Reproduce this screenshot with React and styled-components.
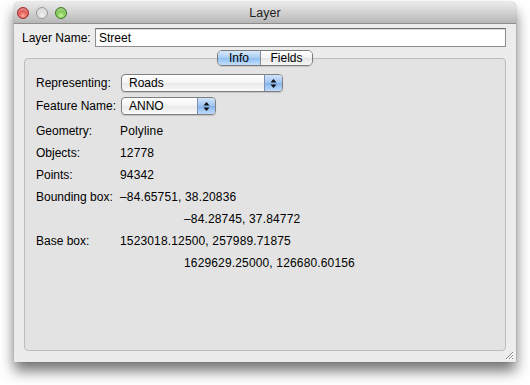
import React from "react";
import styled, { createGlobalStyle } from "styled-components";

const Global = createGlobalStyle`
  html, body { margin: 0; padding: 0; background: #ffffff; }
  body { font-family: "Liberation Sans", Arial, sans-serif; font-size: 12px; color: #000; }
`;

const Stage = styled.div`
  width: 530px;
  height: 385px;
  padding: 2px 14px 0 14px;
  box-sizing: border-box;
`;

const Window = styled.div`
  position: relative;
  width: 502px;
  height: 360px;
  background: #ececec;
  border-radius: 5px 5px 0 0;
  box-shadow: 0 9px 14px rgba(0, 0, 0, 0.55), 0 0 1px rgba(0, 0, 0, 0.5);
  display: flex;
  flex-direction: column;
`;

const TitleBar = styled.div`
  height: 22px;
  flex: none;
  border-radius: 5px 5px 0 0;
  background: linear-gradient(#eaeaea, #d2d2d2 50%, #b6b6b6);
  border-bottom: 1px solid #8e8e8e;
  box-sizing: border-box;
  display: flex;
  align-items: center;
  position: relative;
`;

const Lights = styled.div`
  display: flex;
  gap: 7px;
  padding-left: 3px;
`;

const Light = styled.div`
  width: 12px;
  height: 12px;
  border-radius: 50%;
  box-sizing: border-box;
  border: 1px solid ${(p) => p.$edge};
  background: radial-gradient(circle at 50% 75%, ${(p) => p.$light} 0%, ${(p) => p.$mid} 55%, ${(p) => p.$dark} 100%);
  box-shadow: inset 0 2px 2px rgba(255,255,255,0.5);
`;

const Title = styled.div`
  position: absolute;
  left: 0;
  right: 0;
  text-align: center;
  font-size: 12.5px;
  color: #222;
  pointer-events: none;
`;

const Body = styled.div`
  flex: 1;
  display: flex;
  flex-direction: column;
  padding: 4px 10px 11px 8px;
`;

const NameRow = styled.div`
  display: flex;
  align-items: center;
  height: 19px;
`;

const Label = styled.span`
  width: 73px;
  flex: none;
  white-space: nowrap;
`;

const TextField = styled.div`
  flex: 1;
  height: 19px;
  box-sizing: border-box;
  background: #fff;
  border: 1px solid #8d8d8d;
  border-top-color: #6f6f6f;
  box-shadow: inset 0 1px 1px rgba(0,0,0,0.15);
  padding: 0 3px;
  display: flex;
  align-items: center;
`;

const TabView = styled.div`
  flex: 1;
  display: flex;
  flex-direction: column;
  margin-top: 3px;
  margin-left: 2px;
`;

const TabBar = styled.div`
  display: flex;
  justify-content: center;
  position: relative;
  z-index: 1;
  margin-bottom: -8px;
`;

const Segments = styled.div`
  display: flex;
  height: 16px;
  border: 1px solid #7a7a7a;
  border-radius: 5px;
  overflow: hidden;
  box-sizing: border-box;
  box-shadow: 0 1px 1px rgba(0,0,0,0.12);
`;

const Segment = styled.div`
  width: ${(p) => p.$w}px;
  display: flex;
  align-items: center;
  justify-content: center;
  font-size: 12px;
  background: ${(p) =>
    p.$active
      ? "linear-gradient(#d7e8fb, #a9cdf3 50%, #8dbdf0 51%, #c3e0fc)"
      : "linear-gradient(#ffffff, #f3f3f3 50%, #e6e6e6 51%, #f6f6f6)"};
  & + & { border-left: 1px solid #8a8a8a; }
`;

const Panel = styled.div`
  flex: 1;
  background: #e3e3e3;
  border: 1px solid #bdbdbd;
  border-radius: 4px;
  padding: 15px 0 0 11px;
  display: flex;
  flex-direction: column;
`;

const FormRow = styled.div`
  display: flex;
  align-items: center;
  height: 18px;
  margin-bottom: 5px;
`;

const FormLabel = styled.span`
  width: 85px;
  flex: none;
  white-space: nowrap;
`;

const Popup = styled.div`
  width: ${(p) => p.$w}px;
  height: 18px;
  box-sizing: border-box;
  border: 1px solid #7f7f7f;
  border-radius: 4px;
  display: flex;
  overflow: hidden;
  background: linear-gradient(#ffffff, #f4f4f4 50%, #e8e8e8 51%, #fafafa);
  box-shadow: 0 1px 1px rgba(0,0,0,0.15);
`;

const PopupText = styled.div`
  flex: 1;
  padding-left: 7px;
  display: flex;
  align-items: center;
`;

const PopupArrow = styled.div`
  width: 17px;
  border-left: 1px solid #7f8fb0;
  background: linear-gradient(#d0e3fa, #9ec4f0 50%, #83b3ec 51%, #bfdbfa);
  display: flex;
  align-items: center;
  justify-content: center;
`;

const InfoList = styled.div`
  display: grid;
  grid-template-columns: 84px auto;
  grid-auto-rows: 22px;
  align-items: center;
`;

const Value = styled.span`
  white-space: nowrap;
  letter-spacing: 0.15px;
  padding-left: ${(p) => p.$indent || 0}px;
`;

const Grip = styled.svg`
  position: absolute;
  right: 2px;
  bottom: 2px;
`;

const Arrows = () => (
  <svg width="7" height="11" viewBox="0 0 7 11">
    <path d="M3.5 1 L6.5 4.5 L0.5 4.5 Z" fill="#111" />
    <path d="M3.5 10 L6.5 6.5 L0.5 6.5 Z" fill="#111" />
  </svg>
);

export default function App() {
  const info = [
    ["Geometry:", "Polyline"],
    ["Objects:", "12778"],
    ["Points:", "94342"],
    ["Bounding box:", "\u201284.65751, 38.20836"],
    ["", "\u201284.28745, 37.84772", 64],
    ["Base box:", "1523018.12500, 257989.71875"],
    ["", "1629629.25000, 126680.60156", 64],
  ];
  return (
    <>
      <Global />
      <Stage>
        <Window>
          <TitleBar>
            <Lights>
              <Light $edge="#9b2a2a" $light="#ffb0a8" $mid="#e0453d" $dark="#a71d1d" />
              <Light $edge="#9a9a9a" $light="#f4f4f4" $mid="#d8d8d8" $dark="#b2b2b2" />
              <Light $edge="#3f7a25" $light="#c8f3a2" $mid="#70c23f" $dark="#3d8a1c" />
            </Lights>
            <Title>Layer</Title>
          </TitleBar>
          <Body>
            <NameRow>
              <Label>Layer Name:</Label>
              <TextField>Street</TextField>
            </NameRow>
            <TabView>
              <TabBar>
                <Segments>
                  <Segment $w={42} $active>Info</Segment>
                  <Segment $w={51}>Fields</Segment>
                </Segments>
              </TabBar>
              <Panel>
                <FormRow>
                  <FormLabel>Representing:</FormLabel>
                  <Popup $w={162}>
                    <PopupText>Roads</PopupText>
                    <PopupArrow><Arrows /></PopupArrow>
                  </Popup>
                </FormRow>
                <FormRow>
                  <FormLabel>Feature Name:</FormLabel>
                  <Popup $w={95}>
                    <PopupText>ANNO</PopupText>
                    <PopupArrow><Arrows /></PopupArrow>
                  </Popup>
                </FormRow>
                <InfoList>
                  {info.map(([l, v, ind], i) => (
                    <React.Fragment key={i}>
                      <span>{l}</span>
                      <Value $indent={ind}>{v}</Value>
                    </React.Fragment>
                  ))}
                </InfoList>
              </Panel>
            </TabView>
          </Body>
          <Grip width="10" height="10" viewBox="0 0 10 10">
            <path d="M9 2 L2 9 M9 5 L5 9 M9 8 L8 9" stroke="#8a8a8a" strokeWidth="1" />
            <path d="M10 3 L3 10 M10 6 L6 10" stroke="#ffffff" strokeWidth="1" />
          </Grip>
        </Window>
      </Stage>
    </>
  );
}
